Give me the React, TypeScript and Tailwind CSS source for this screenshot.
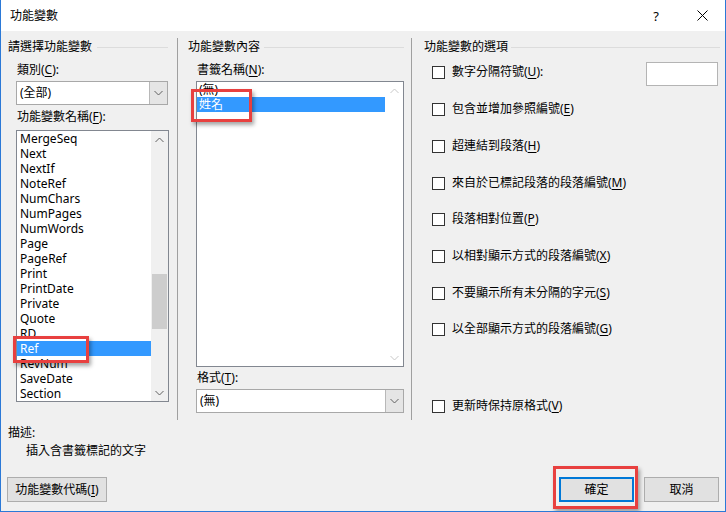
import React from "react";

const U = ({ c }: { c: string }) => <span className="underline underline-offset-2">{c}</span>;

const ChevDown = ({ color = "#606060" }: { color?: string }) => (
  <svg width="9" height="6" viewBox="0 0 9 6">
    <path d="M0.5 1 L4.5 5 L8.5 1" fill="none" stroke={color} strokeWidth="1" />
  </svg>
);
const ChevUp = ({ color = "#606060" }: { color?: string }) => (
  <svg width="9" height="6" viewBox="0 0 9 6">
    <path d="M0.5 5 L4.5 1 L8.5 5" fill="none" stroke={color} strokeWidth="1" />
  </svg>
);

const Combo = ({ text, w }: { text: string; w: string }) => (
  <div className={`flex h-[24px] border border-[#a8a8a8] bg-white ${w}`}>
    <div className="flex-1 pl-[3px] leading-[22px]">{text}</div>
    <div className="flex w-[18px] items-center justify-center border-l border-[#b8b8b8] bg-[#e5e5e5]">
      <ChevDown />
    </div>
  </div>
);

const Check = ({ children }: { children: React.ReactNode }) => (
  <div className="flex h-[24px] items-center">
    <div className="ml-[8px] h-[13px] w-[13px] border border-[#333333] bg-white" />
    <div className="ml-[7px] leading-[16px]">{children}</div>
  </div>
);

const fields = [
  "MergeSeq",
  "Next",
  "NextIf",
  "NoteRef",
  "NumChars",
  "NumPages",
  "NumWords",
  "Page",
  "PageRef",
  "Print",
  "PrintDate",
  "Private",
  "Quote",
  "RD",
  "Ref",
  "RevNum",
  "SaveDate",
  "Section",
];

const options: { label: React.ReactNode; mt: string }[] = [
  { label: <>超連結到段落(<U c="H" />)</>, mt: "mt-[13px]" },
  { label: <>來自於已標記段落的段落編號(<U c="M" />)</>, mt: "mt-[13px]" },
  { label: <>段落相對位置(<U c="P" />)</>, mt: "mt-[12px]" },
  { label: <>以相對顯示方式的段落編號(<U c="X" />)</>, mt: "mt-[13px]" },
  { label: <>不要顯示所有未分隔的字元(<U c="S" />)</>, mt: "mt-[13px]" },
  { label: <>以全部顯示方式的段落編號(<U c="G" />)</>, mt: "mt-[12px]" },
];

export default function App() {
  return (
    <div className="relative h-[512px] w-[726px] overflow-hidden border-x border-b border-[#2b79d7] bg-[#f0f0f0] font-['Noto_Sans','Noto_Sans_CJK_TC',sans-serif] text-[12px] leading-[16px] text-black">
      {/* Title bar */}
      <div className="flex h-[31px] items-center bg-white">
        <div className="flex-1 pl-[9px]">功能變數</div>
        <div className="flex h-[31px] w-[46px] items-center justify-center text-[13px]">?</div>
        <div className="flex h-[31px] w-[46px] items-center justify-center">
          <svg width="11" height="11" viewBox="0 0 11 11">
            <path d="M0.5 0.5 L10.5 10.5 M10.5 0.5 L0.5 10.5" stroke="#000" strokeWidth="1" />
          </svg>
        </div>
      </div>

      {/* Main three columns */}
      <div className="flex h-[390px]">
        {/* Left column */}
        <div className="flex w-[176px] flex-col pl-[7px] pr-[9px] pt-[8px]">
          <div className="flex h-[16px] items-center">
            <span>請選擇功能變數</span>
            <div className="ml-[5px] h-px flex-1 bg-[#dcdcdc]" />
          </div>
          <div className="ml-[9px] mt-[7px]">
            類別(<U c="C" />):
          </div>
          <div className="ml-[8px] mt-[3px]">
            <Combo text="(全部)" w="w-[152px]" />
          </div>
          <div className="ml-[9px] mt-[4px]">
            功能變數名稱(<U c="F" />):
          </div>
          <div className="ml-[8px] mt-[5px] flex h-[272px] w-[153px] border border-[#828790] bg-white">
            <div className="flex-1">
              {fields.map((f) => (
                <div
                  key={f}
                  className={`h-[15px] pl-[3px] leading-[15px] ${f === "Ref" ? "bg-[#3399ff] text-white" : ""}`}
                >
                  {f}
                </div>
              ))}
            </div>
            <div className="relative w-[17px] bg-[#f0f0f0]">
              <div className="flex h-[17px] items-center justify-center">
                <ChevUp />
              </div>
              <div className="absolute left-[1px] top-[143px] h-[55px] w-[15px] bg-[#cdcdcd]" />
              <div className="absolute bottom-0 left-0 flex h-[17px] w-[17px] items-center justify-center">
                <ChevDown />
              </div>
            </div>
          </div>
        </div>

        <div className="mt-[7px] h-[382px] w-px bg-[#a0a0a0]" />

        {/* Middle column */}
        <div className="flex w-[233px] flex-col pl-[10px] pr-[7px] pt-[8px]">
          <div className="flex h-[16px] items-center">
            <span>功能變數內容</span>
            <div className="ml-[4px] h-px flex-1 bg-[#dcdcdc]" />
          </div>
          <div className="ml-[9px] mt-[7px]">
            書籤名稱(<U c="N" />):
          </div>
          <div className="ml-[8px] mt-[3px] flex h-[286px] w-[208px] border border-[#828790] bg-white">
            <div className="flex-1">
              <div className="h-[15px] pl-[2px] leading-[15px]">(無)</div>
              <div className="h-[15px] bg-[#3399ff] pl-[2px] leading-[15px] text-white">姓名</div>
            </div>
            <div className="flex w-[18px] flex-col justify-between">
              <div className="flex h-[17px] items-center justify-center">
                <ChevUp color="#c8c8c8" />
              </div>
              <div className="flex h-[17px] items-center justify-center">
                <ChevDown color="#c8c8c8" />
              </div>
            </div>
          </div>
          <div className="ml-[9px] mt-[3px]">
            格式(<U c="T" />):
          </div>
          <div className="ml-[8px] mt-[3px]">
            <Combo text="(無)" w="w-[208px]" />
          </div>
        </div>

        <div className="mt-[7px] h-[382px] w-px bg-[#a0a0a0]" />

        {/* Right column */}
        <div className="flex flex-1 flex-col pl-[12px] pr-[5px] pt-[8px]">
          <div className="flex h-[16px] items-center">
            <span>功能變數的選項</span>
            <div className="ml-[3px] h-px flex-1 bg-[#dcdcdc]" />
          </div>
          <div className="mt-[5px] flex h-[24px] items-center">
            <Check>
              數字分隔符號(<U c="U" />):
            </Check>
            <div className="ml-auto mr-[2px] mt-[3px] h-[24px] w-[72px] border border-[#b4b4b4] bg-white" />
          </div>
          <div className="mt-[13px]">
            <Check>
              包含並增加參照編號(<U c="E" />)
            </Check>
          </div>
          {options.map((o, i) => (
            <div key={i} className={o.mt}>
              <Check>{o.label}</Check>
            </div>
          ))}
          <div className="mt-[53px]">
            <Check>
              更新時保持原格式(<U c="V" />)
            </Check>
          </div>
        </div>
      </div>

      {/* Description */}
      <div className="mt-[4px] pl-[7px]">描述:</div>
      <div className="mt-[2px] pl-[25px]">插入含書籤標記的文字</div>

      {/* Buttons */}
      <div className="mt-[18px] flex items-center px-[6px]">
        <div className="flex h-[25px] w-[100px] items-center justify-center border border-[#adadad] bg-[#e1e1e1]">
          功能變數代碼(<U c="I" />)
        </div>
        <div className="flex-1" />
        <div className="flex h-[25px] w-[75px] items-center justify-center border-2 border-[#0078d7] bg-[#e1e1e1]">
          確定
        </div>
        <div className="ml-[10px] flex h-[25px] w-[75px] items-center justify-center border border-[#adadad] bg-[#e1e1e1]">
          取消
        </div>
      </div>

      {/* Red annotation boxes */}
      <div className="absolute left-[12px] top-[336px] h-[27px] w-[76px] border-[3px] border-[#e8403f] shadow-[2px_3px_4px_rgba(0,0,0,0.35)]" />
      <div className="absolute left-[190px] top-[89px] h-[33px] w-[61px] border-[3px] border-[#e8403f] shadow-[2px_3px_4px_rgba(0,0,0,0.35)]" />
      <div className="absolute left-[552px] top-[466px] h-[43px] w-[85px] border-[3px] border-[#e8403f] shadow-[2px_3px_4px_rgba(0,0,0,0.35)]" />
    </div>
  );
}
